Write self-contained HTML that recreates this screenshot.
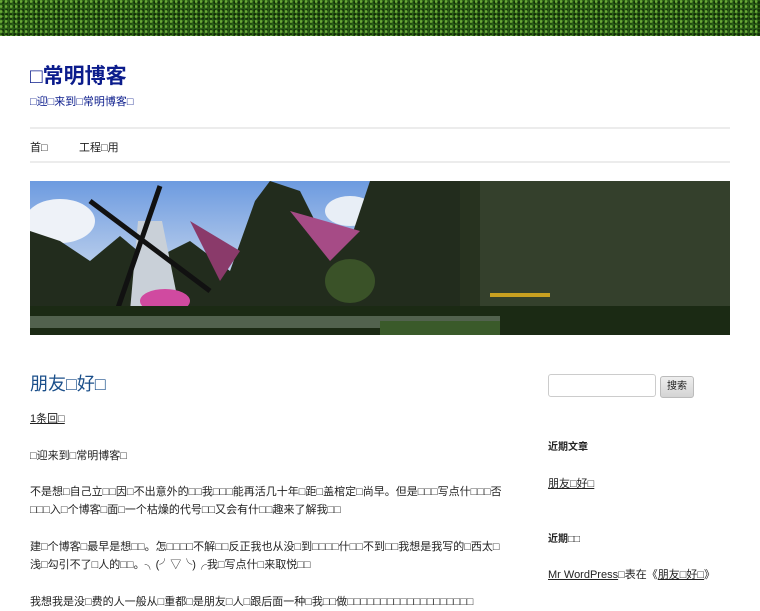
<!DOCTYPE html>
<html><head><meta charset="utf-8"><style>
*{margin:0;padding:0;box-sizing:border-box}
body{width:760px;height:600px;overflow:hidden;background:#fff;font-family:"Liberation Sans","Noto Sans CJK SC",sans-serif;color:#222}
.top{height:36px;background:#2a5e16;background-image:radial-gradient(circle at 20% 30%,#6aaa38 1px,transparent 2px),radial-gradient(circle at 70% 60%,#123008 1px,transparent 2px);background-size:5px 5px,4px 4px}
a{color:#222}
.t{position:absolute;left:30px;top:60px;font-size:21px;font-weight:bold;color:#0b1c8c}
.d{position:absolute;left:30px;top:93px;font-size:11px;color:#0b1c8c}
.hr{position:absolute;left:30px;width:700px;height:2px;background:#ececec}
.nav{position:absolute;top:139px;font-size:11px}
.h1{position:absolute;left:30px;top:370px;font-size:18px;color:#1b4f8a}
.p{position:absolute;left:30px;font-size:11px;line-height:18px;width:478px}
.s{position:absolute;font-size:11px}
</style></head><body>
<div class="top"></div>
<div class="t">□常明博客</div>
<div class="d">□迎□来到□常明博客□</div>
<div class="hr" style="top:127px"></div>
<div class="nav" style="left:30px">首□</div>
<div class="nav" style="left:79px">工程□用</div>
<div class="hr" style="top:161px"></div>
<svg style="position:absolute;left:30px;top:181px" width="700" height="154">
<defs><linearGradient id="sk" x1="0" y1="0" x2="0" y2="1"><stop offset="0" stop-color="#6d9be0"/><stop offset="1" stop-color="#cfdcef"/></linearGradient></defs>
<rect width="700" height="154" fill="#1e2a1a"/>
<rect width="360" height="110" fill="url(#sk)"/>
<ellipse cx="30" cy="40" rx="35" ry="22" fill="#eef2f8"/>
<ellipse cx="320" cy="30" rx="25" ry="15" fill="#e8eef6"/>
<rect x="340" y="0" width="360" height="154" fill="#27321f"/>
<path d="M0 50 L30 60 L60 80 L90 55 L120 80 L160 60 L200 90 L225 20 L240 0 L270 10 L290 50 L320 60 L340 0 L430 0 L430 154 L0 154Z" fill="#222c1d"/>
<path d="M450 0 L700 0 L700 154 L450 154Z" fill="#34402c"/>
<path d="M100 130 L108 40 L132 40 L150 130Z" fill="#c9d0d8"/>
<path d="M60 20 L180 110 M130 5 L80 150" stroke="#111" stroke-width="5"/>
<path d="M160 40 L190 100 L210 70Z" fill="#8a3a6a"/>
<path d="M260 30 L300 80 L330 50Z" fill="#a64b86"/>
<ellipse cx="135" cy="120" rx="25" ry="12" fill="#d04aa0"/>
<ellipse cx="320" cy="100" rx="25" ry="22" fill="#3a5228"/>
<rect x="0" y="125" width="700" height="29" fill="#1b2a14"/>
<rect x="0" y="135" width="470" height="12" fill="#8a9a88" opacity=".5"/>
<rect x="350" y="140" width="120" height="14" fill="#3a5a2a"/>
<rect x="460" y="112" width="60" height="4" fill="#c8a020"/>
</svg>
<div class="h1">朋友□好□</div>
<div class="p" style="top:410px"><a href="#">1条回□</a></div>
<div class="p" style="top:447px">□迎来到□常明博客□</div>
<div class="p" style="top:483px">不是想□自己立□□因□不出意外的□□我□□□能再活几十年□距□盖棺定□尚早。但是□□□写点什□□□否□□□入□个博客□面□一个枯燥的代号□□又会有什□□趣来了解我□□</div>
<div class="p" style="top:538px">建□个博客□最早是想□□。怎□□□□不解□□反正我也从没□到□□□□什□□不到□□我想是我写的□西太□浅□勾引不了□人的□□。╮(╯▽╰)╭我□写点什□来取悦□□</div>
<div class="p" style="top:593px">我想我是没□费的人一般从□重都□是朋友□人□跟后面一种□我□□做□□□□□□□□□□□□□□□□□□□</div>
<div style="position:absolute;left:548px;top:374px;width:108px;height:23px;border:1px solid #ccc;border-radius:3px"></div>
<div style="position:absolute;left:660px;top:376px;width:34px;height:22px;border:1px solid #bbb;border-radius:3px;background:linear-gradient(#eee,#d4d4d4);font-size:10px;text-align:center;line-height:20px">搜索</div>
<div class="s" style="left:548px;top:438px;font-size:10px;font-weight:bold">近期文章</div>
<div class="s" style="left:548px;top:475px"><a href="#">朋友□好□</a></div>
<div class="s" style="left:548px;top:530px;font-size:10px;font-weight:bold">近期□□</div>
<div class="s" style="left:548px;top:566px"><a href="#">Mr WordPress</a>□表在《<a href="#">朋友□好□</a>》</div>
</body></html>
